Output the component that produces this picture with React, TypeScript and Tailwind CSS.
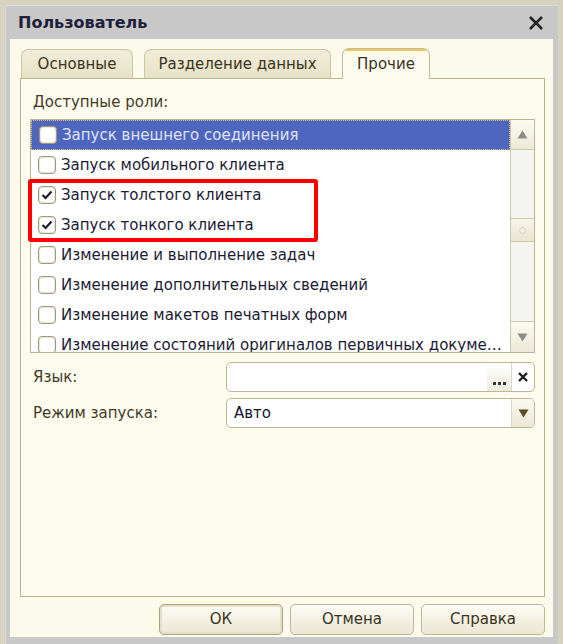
import React from 'react';

const roles = [
  { label: 'Запуск внешнего соединения', checked: false, selected: true },
  { label: 'Запуск мобильного клиента', checked: false },
  { label: 'Запуск толстого клиента', checked: true },
  { label: 'Запуск тонкого клиента', checked: true },
  { label: 'Изменение и выполнение задач', checked: false },
  { label: 'Изменение дополнительных сведений', checked: false },
  { label: 'Изменение макетов печатных форм', checked: false },
  { label: 'Изменение состояний оригиналов первичных документов', checked: false },
];

const tabs = [
  { label: 'Основные', width: 'w-[112px]' },
  { label: 'Разделение данных', width: 'w-[187px]' },
  { label: 'Прочие', width: 'w-[88px]', active: true },
];

function CheckBox({ checked }: { checked: boolean }) {
  return (
    <span className="flex h-[18px] w-[18px] shrink-0 items-center justify-center rounded-[4px] border-[1.5px] border-[#9f997c] bg-white shadow-[inset_0_0_0_1px_#ebe8da]">
      {checked && (
        <svg width="12" height="10" viewBox="0 0 12 10">
          <path d="M1.5 5 L4.6 8 L10.5 1.5" fill="none" stroke="#1f1f22" strokeWidth="2.2" />
        </svg>
      )}
    </span>
  );
}

function Arrow({ up, color = '#8b8b8b' }: { up?: boolean; color?: string }) {
  return (
    <svg width="11" height="9" viewBox="0 0 11 9">
      <path d={up ? 'M5.5 0.5 L10.5 8.5 L0.5 8.5 Z' : 'M0.5 0.5 L10.5 0.5 L5.5 8.5 Z'} fill={color} />
    </svg>
  );
}

function ScrollBar() {
  return (
    <div className="flex w-[24px] shrink-0 flex-col border-l border-[#cdc7a6] bg-[#f4f4f1]">
      <div className="flex h-[30px] items-center justify-center border-b border-[#cdc7a6] bg-gradient-to-b from-[#fcfbf3] to-[#ece8d6]">
        <Arrow up />
      </div>
      <div className="h-[68px]" />
      <div className="flex h-[24px] items-center justify-center border-y border-[#cdc7a6] bg-gradient-to-b from-[#f7f5ea] to-[#e9e5d2]">
        <span className="h-[7px] w-[7px] rounded-full border border-[#d2cfc0] bg-[#f1efe6]" />
      </div>
      <div className="flex-1" />
      <div className="flex h-[31px] items-center justify-center border-t border-[#cdc7a6] bg-gradient-to-b from-[#fcfbf3] to-[#ece8d6]">
        <Arrow />
      </div>
    </div>
  );
}

function DialogButton({ label, isDefault }: { label: string; isDefault?: boolean }) {
  return (
    <button
      className={
        'flex h-[31px] w-[124px] items-center justify-center rounded-[5px] border bg-gradient-to-b from-[#fdfcf5] to-[#ebe7d3] text-[15px] text-[#3b3322] ' +
        (isDefault ? 'border-[#a8a17e] shadow-[inset_0_0_0_2px_#e4dfc6]' : 'border-[#bdb794]')
      }
    >
      {label}
    </button>
  );
}

export default function App() {
  return (
    <div className="h-[644px] w-[563px] bg-[#d6d2bd] px-[5px] pt-[5px] font-['DejaVu_Sans',sans-serif] text-[15px]">
      <div className="flex h-[639px] flex-col bg-[#c8c8c8] px-[5px] pb-[7px] shadow-[inset_1px_1px_0_#dcdcdc]">
        {/* title bar */}
        <div className="flex h-[34px] shrink-0 items-center justify-between pl-[8px] pr-[8px] pt-[2px]">
          <span className="text-[16px] font-bold text-[#20203a]">Пользователь</span>
          <svg width="18" height="18" viewBox="0 0 18 18">
            <path d="M3 3 L15 15 M15 3 L3 15" stroke="#222" strokeWidth="2.6" />
          </svg>
        </div>

        <div className="flex flex-1 flex-col bg-[#fcfaeb] pl-[10px] pr-[8px] pt-[9px]">
          {/* tabs */}
          <div className="flex h-[30px] shrink-0 items-end gap-[11px] pl-[1px]">
            {tabs.map((t) =>
              t.active ? (
                <div
                  key={t.label}
                  className={`${t.width} relative -mb-px flex h-[31px] items-center justify-center rounded-t-[7px] border border-b-0 border-[#c2bc98] bg-[#fdfbee] text-[#3a3322]`}
                >
                  <span className="absolute inset-x-[3px] top-0 h-[2px] rounded-t bg-[#f2c25c]" />
                  {t.label}
                </div>
              ) : (
                <div
                  key={t.label}
                  className={`${t.width} flex h-[29px] items-center justify-center rounded-t-[7px] border border-b-0 border-[#cbc5a2] bg-gradient-to-b from-[#f1edd9] to-[#e7e1c6] text-[#3a3322]`}
                >
                  {t.label}
                </div>
              ),
            )}
          </div>

          {/* tab panel */}
          <div className="flex h-[519px] shrink-0 flex-col border border-[#b9b38e] bg-[#fdfbee] px-[9px] pt-[14px]">
            <div className="h-[18px] pl-[3px] leading-[18px] text-[#433b25]">Доступные роли:</div>

            <div className="relative mt-[8px] flex h-[234px] shrink-0 border border-[#bbb592] bg-white">
              <div className="flex-1 overflow-hidden">
                {roles.map((r) => (
                  <div
                    key={r.label}
                    className={
                      'flex h-[30px] items-center gap-[5px] pl-[7px] pr-[4px] ' +
                      (r.selected
                        ? 'border border-dotted border-[#d4c67c] bg-[#4f66bf] text-[#dfe3f7]'
                        : 'text-[#1b1b33]')
                    }
                  >
                    <CheckBox checked={r.checked} />
                    <span className="truncate">{r.label}</span>
                  </div>
                ))}
              </div>
              <ScrollBar />

              {/* highlight around the client launch rights */}
              <div className="pointer-events-none absolute left-[-3px] top-[59px] h-[63px] w-[290px] rounded-[3px] border-4 border-[#ff0000]" />
            </div>

            <div className="mt-[9px] flex h-[30px] shrink-0 items-center">
              <span className="w-[196px] pl-[3px] text-[#433b25]">Язык:</span>
              <div className="flex h-full flex-1 overflow-hidden rounded-[5px] border border-[#bdb793] bg-white">
                <div className="flex-1" />
                <div className="flex w-[24px] items-end justify-center gap-[2px] bg-gradient-to-b from-white to-[#eeebdc] pb-[6px]">
                  <span className="h-[3px] w-[3px] bg-[#333]" />
                  <span className="h-[3px] w-[3px] bg-[#333]" />
                  <span className="h-[3px] w-[3px] bg-[#333]" />
                </div>
                <div className="flex w-[23px] items-center justify-center border-l border-[#dcd8c4]">
                  <svg width="12" height="12" viewBox="0 0 12 12">
                    <path d="M2 2 L10 10 M10 2 L2 10" stroke="#1e1e1e" strokeWidth="2.4" />
                  </svg>
                </div>
              </div>
            </div>

            <div className="mt-[6px] flex h-[30px] shrink-0 items-center">
              <span className="w-[196px] pl-[3px] text-[#433b25]">Режим запуска:</span>
              <div className="flex h-full flex-1 overflow-hidden rounded-[5px] border border-[#bdb793] bg-white">
                <div className="flex flex-1 items-center pl-[7px] text-[#15152b]">Авто</div>
                <div className="flex w-[23px] items-center justify-center border-l border-[#dcd8c4] bg-gradient-to-b from-[#fbfaf2] to-[#ebe7d4]">
                  <Arrow color="#5b4c2b" />
                </div>
              </div>
            </div>
          </div>

          <div className="mt-[7px] flex justify-end gap-[7px]">
            <DialogButton label="ОК" isDefault />
            <DialogButton label="Отмена" />
            <DialogButton label="Справка" />
          </div>
        </div>
      </div>
    </div>
  );
}
